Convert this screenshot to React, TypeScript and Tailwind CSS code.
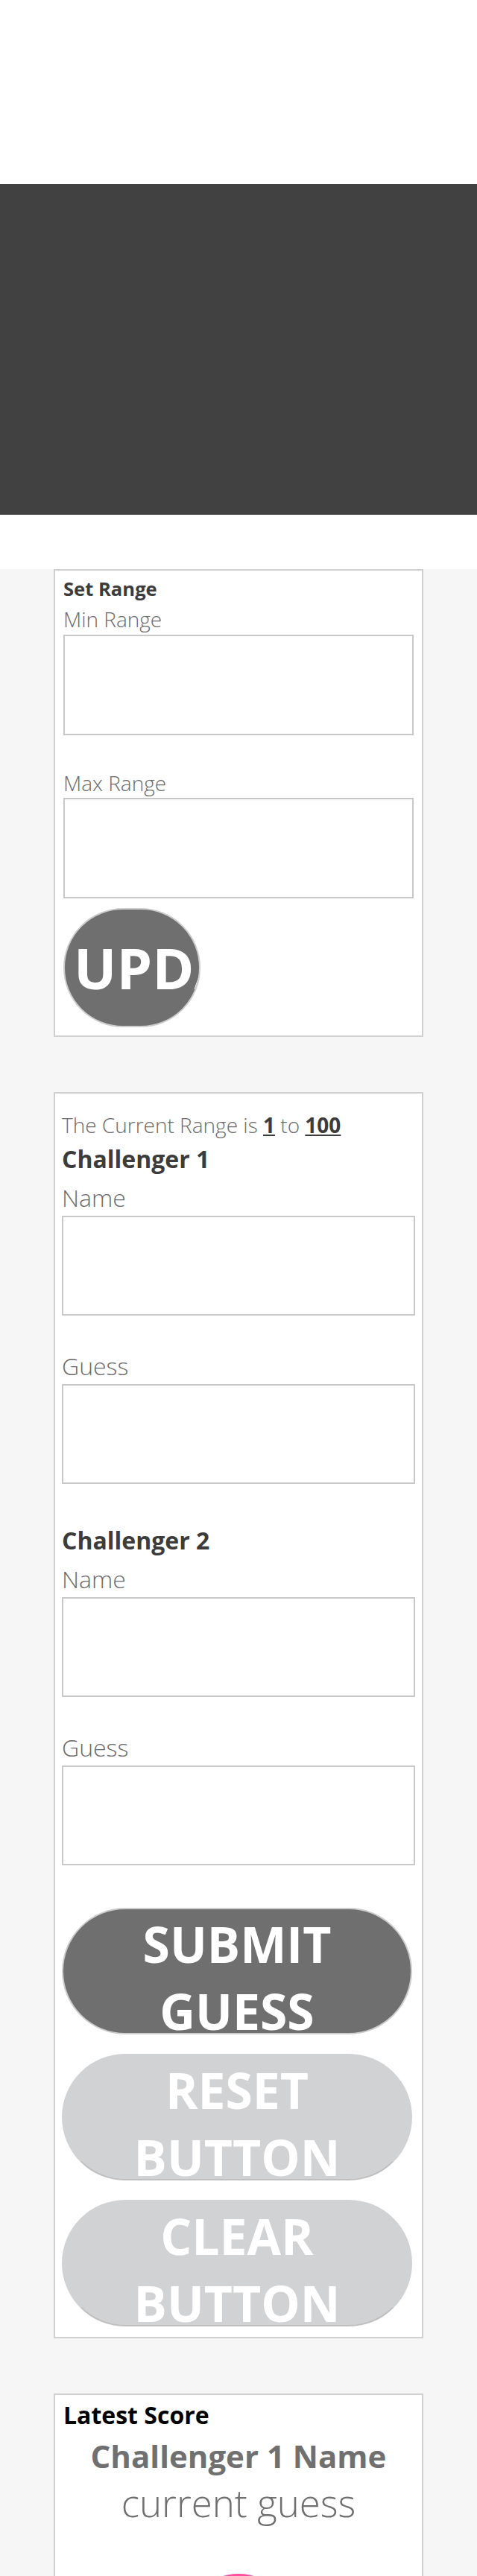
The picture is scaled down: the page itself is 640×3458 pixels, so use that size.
import React from "react";

function Label({ children, className = "" }: { children: React.ReactNode; className?: string }) {
  return <label className={`block font-light text-[#6b6b6b] ${className}`}>{children}</label>;
}

function Field({ className = "" }: { className?: string }) {
  return <input type="text" className={`block w-full border-2 border-[#c8c8c8] bg-white outline-none ${className}`} />;
}

function ChallengerBlock({ n, first }: { n: number; first: boolean }) {
  return (
    <div className={first ? "mt-[5px]" : "mt-[54px]"}>
      <h3 className="text-[32px] leading-[44px] font-bold text-[#3c3c3c]">Challenger {n}</h3>
      <Label className="mt-[8px] text-[32px] leading-[44px]">Name</Label>
      <Field className="mt-[2px] h-[134px]" />
      <Label className="mt-[46px] text-[32px] leading-[44px]">Guess</Label>
      <Field className="mt-[2px] h-[134px]" />
    </div>
  );
}

function PillButton({ children, dark, className = "" }: { children: React.ReactNode; dark?: boolean; className?: string }) {
  return (
    <div
      className={`h-[170px] w-[470px] rounded-full border-2 pt-[1px] text-center text-[66px] leading-[90px] font-bold text-white ${
        dark ? "border-[#cdcdcd] bg-[#6f6f6f]" : "border-[#d1d2d4] border-b-[#bfbfbf] bg-[#d1d2d4]"
      } ${className}`}
    >
      {children}
    </div>
  );
}

export default function App() {
  return (
    <div className="w-[640px] font-['Open_Sans',sans-serif]">
      <div className="h-[247px] bg-white" />
      <div className="h-[444px] bg-[#414141]" />
      <div className="h-[73px] bg-white" />
      <main className="bg-[#f6f6f6] pb-[40px]">
        <section className="mx-auto w-[496px] border-2 border-[#d0d0d0] bg-white px-[11px] pt-[7px] pb-[11px]">
          <h2 className="text-[25.6px] leading-[35px] font-bold text-[#3c3c3c]">Set Range</h2>
          <Label className="mt-[4px] text-[28px] leading-[38px]">Min Range</Label>
          <Field className="mt-[2px] h-[135px]" />
          <Label className="mt-[45px] text-[28px] leading-[38px]">Max Range</Label>
          <Field className="mt-[1px] h-[135px]" />
          <div className="mt-[13px] flex h-[160px] w-[184px] items-center overflow-hidden whitespace-nowrap rounded-full border-2 border-[#cdcdcd] bg-[#6f6f6f] pl-[12px] text-[76px] font-bold text-white">
            UPDATE
          </div>
        </section>

        <section className="mx-auto mt-[74px] w-[496px] border-2 border-[#d0d0d0] bg-white px-[9px] pt-[23px] pb-[14px]">
          <p className="text-[28px] leading-[38px] font-light text-[#6b6b6b]">
            The Current Range is{" "}
            <span className="font-bold text-[#3c3c3c] underline">1</span> to{" "}
            <span className="font-bold text-[#3c3c3c] underline">100</span>
          </p>
          <ChallengerBlock n={1} first />
          <ChallengerBlock n={2} first={false} />
          <PillButton dark className="mt-[57px]">SUBMIT GUESS</PillButton>
          <PillButton className="mt-[26px]">RESET BUTTON</PillButton>
          <PillButton className="mt-[26px]">CLEAR BUTTON</PillButton>
        </section>

        <section className="mx-auto mt-[74px] w-[496px] border-2 border-[#d0d0d0] bg-white px-[11px] pt-[5px] pb-[40px]">
          <h2 className="text-[32px] leading-[44px] font-bold text-black">Latest Score</h2>
          <p className="mt-[4px] text-center text-[42px] leading-[57px] font-bold text-[#707070]">Challenger 1 Name</p>
          <p className="text-center text-[51px] leading-[69px] font-light text-[#6f6f6f]">current guess</p>
          <div className="mx-auto mt-[61px] h-[150px] w-[150px] rounded-full bg-[#ff4fa3]" />
        </section>
      </main>
    </div>
  );
}
